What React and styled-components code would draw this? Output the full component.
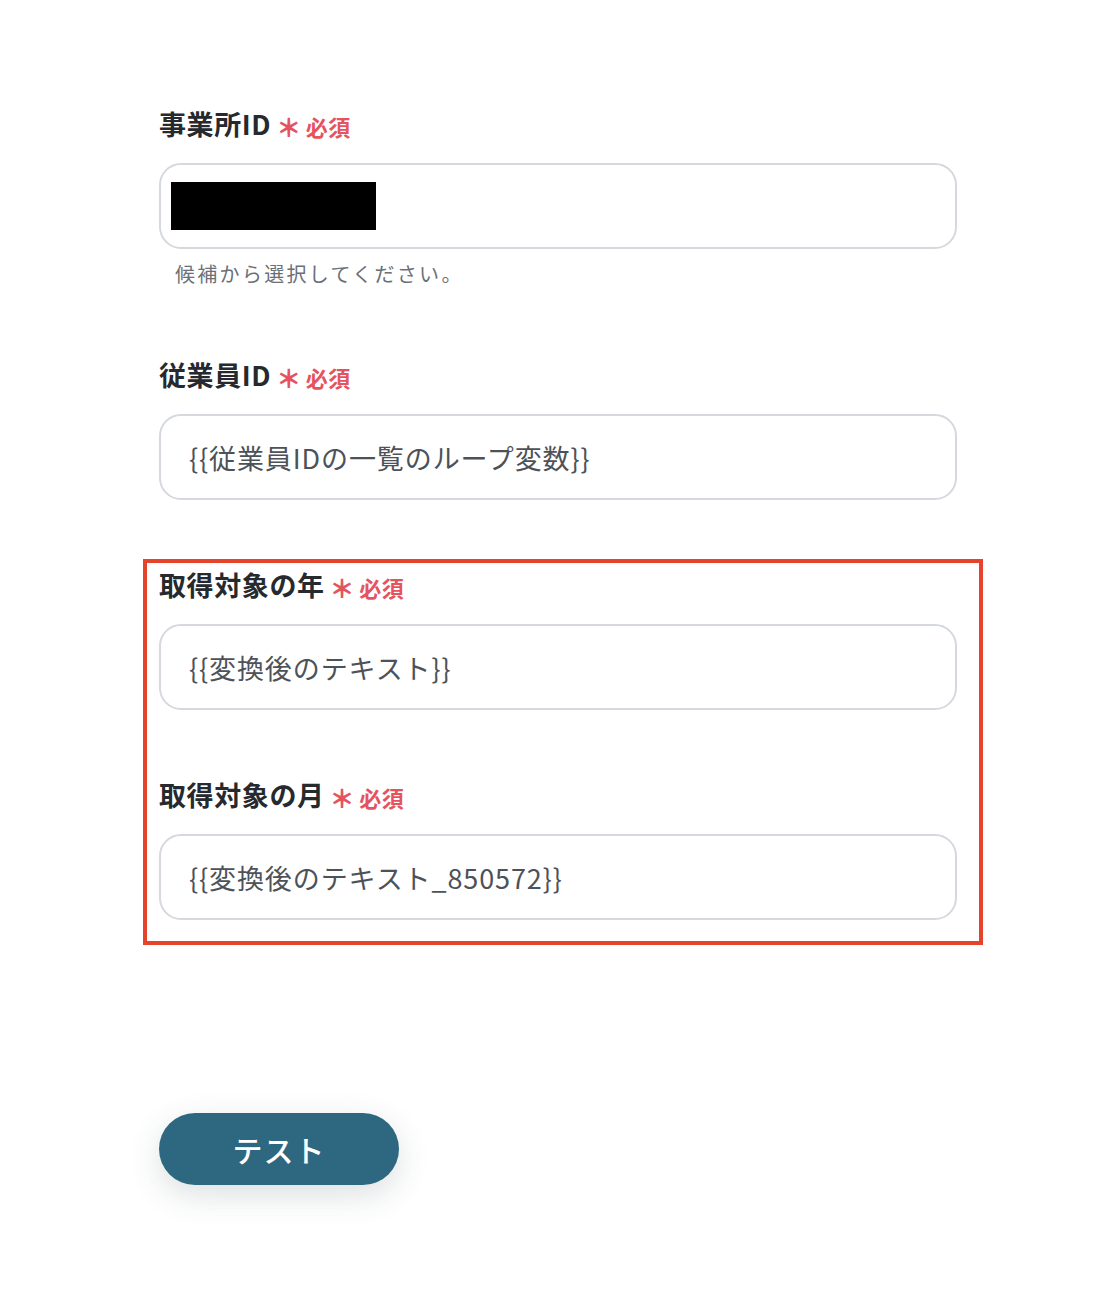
import React from 'react'
import styled, { createGlobalStyle } from 'styled-components'

const GlobalStyle = createGlobalStyle`
  body {
    margin: 0;
    background: #ffffff;
    font-family: "Noto Sans CJK JP", "Noto Sans", sans-serif;
  }
`

const Page = styled.div`
  padding: 108px 0 130px 159px;
  display: flex;
  flex-direction: column;
  align-items: flex-start;
`

const Field = styled.div`
  width: 798px;
  display: flex;
  flex-direction: column;
  margin-top: ${({ gap }) => gap || 0}px;
`

const Label = styled.div`
  display: flex;
  align-items: center;
  height: 36px;
  box-sizing: border-box;
  padding-bottom: 5px;
  font-size: 27px;
  font-weight: 700;
  color: #262a2e;
  letter-spacing: 0.6px;
`

const Required = styled.span`
  display: inline-flex;
  align-items: center;
  margin-left: 5px;
  margin-top: 4px;
  font-size: 22px;
  font-weight: 700;
  color: #e5535f;
  letter-spacing: 0.5px;
`

const Star = styled.span`
  font-size: 25px;
  font-weight: 900;
  margin-right: 4px;
`

const Input = styled.div`
  margin-top: 19px;
  height: 86px;
  box-sizing: border-box;
  border: 2px solid #d5d9de;
  border-radius: 22px;
  display: flex;
  align-items: center;
  padding: 0 28px;
  font-size: 27px;
  letter-spacing: 0.9px;
  color: #4d5258;
  ${({ masked }) => masked ? 'padding-left: 10px;' : ''}
`

const Mask = styled.div`
  width: 205px;
  height: 48px;
  background: #000;
`

const Help = styled.div`
  margin-top: 13px;
  margin-left: 16px;
  font-size: 20px;
  line-height: 24px;
  color: #6b7076;
  letter-spacing: 2.3px;
`

const Highlight = styled.div`
  margin-top: 59px;
  margin-left: -16px;
  width: 840px;
  box-sizing: border-box;
  border: 4px solid #e5432b;
  padding: 6px 22px 21px 12px;
  display: flex;
  flex-direction: column;
`

const Button = styled.button`
  margin-top: 168px;
  width: 240px;
  height: 72px;
  border: none;
  border-radius: 36px;
  background: #2e6880;
  color: #fff;
  font-family: inherit;
  font-size: 30px;
  font-weight: 500;
  letter-spacing: 1px;
  box-shadow: 0 10px 32px rgba(40, 60, 70, 0.16);
  cursor: pointer;
`

function RequiredMark () {
  return (
    <Required><Star>＊</Star>必須</Required>
  )
}

function App () {
  return (
    <>
      <GlobalStyle />
      <Page>
        <Field>
          <Label>事業所ID<RequiredMark /></Label>
          <Input masked><Mask /></Input>
          <Help>候補から選択してください。</Help>
        </Field>
        <Field gap={73}>
          <Label>従業員ID<RequiredMark /></Label>
          <Input>{'{{従業員IDの一覧のループ変数}}'}</Input>
        </Field>
        <Highlight>
          <Field>
            <Label>取得対象の年<RequiredMark /></Label>
            <Input>{'{{変換後のテキスト}}'}</Input>
          </Field>
          <Field gap={69}>
            <Label>取得対象の月<RequiredMark /></Label>
            <Input>{'{{変換後のテキスト_850572}}'}</Input>
          </Field>
        </Highlight>
        <Button>テスト</Button>
      </Page>
    </>
  )
}

export default App
